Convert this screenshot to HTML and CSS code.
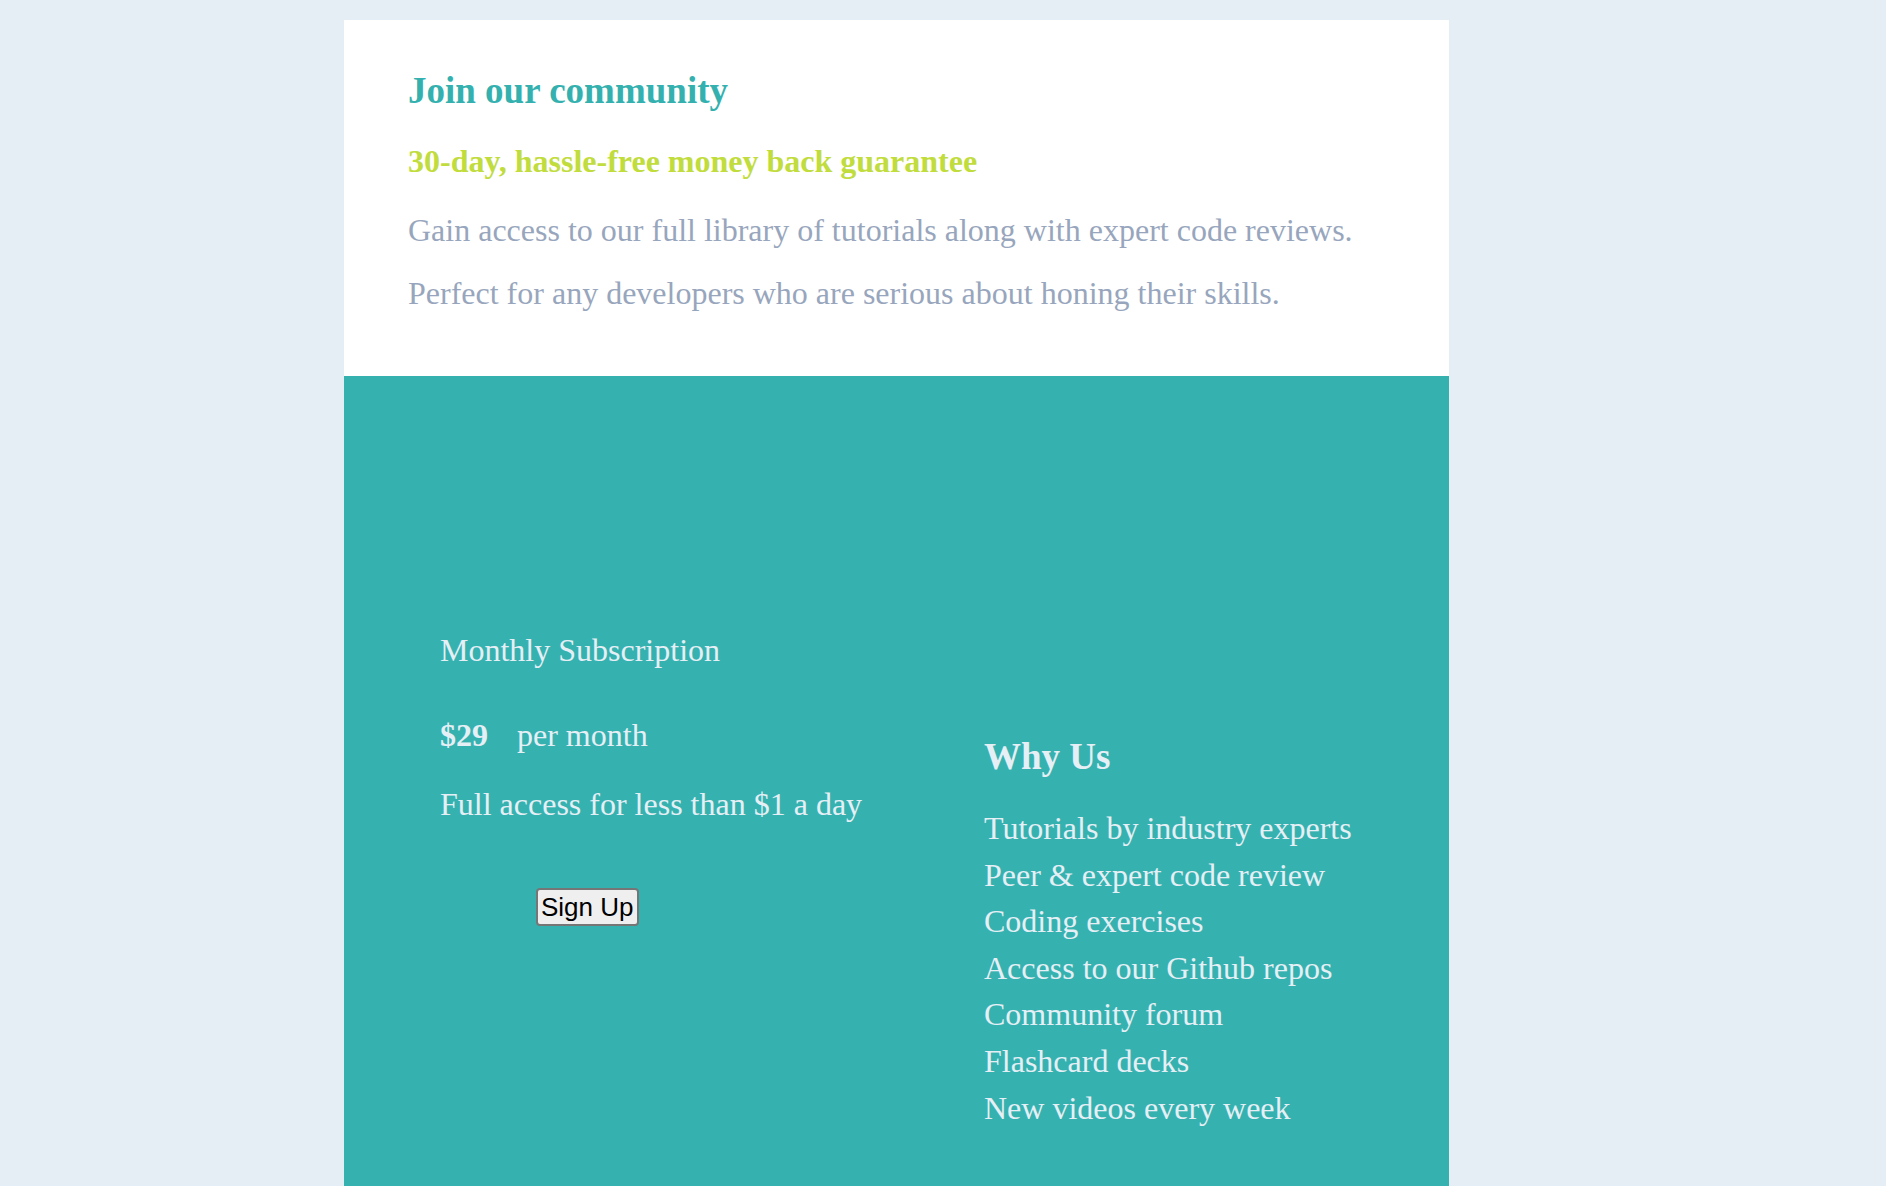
FILE: index.html
```html
<!DOCTYPE html>
<html lang="en">
<head>
<meta charset="utf-8">
<title>Single price grid</title>
<link rel="stylesheet" href="styles.css">
</head>
<body>
<main class="card">
  <section class="intro">
    <h1 class="title">Join our community</h1>
    <h2 class="subtitle">30-day, hassle-free money back guarantee</h2>
    <p class="text text-first">Gain access to our full library of tutorials along with expert code reviews.</p>
    <p class="text text-second">Perfect for any developers who are serious about honing their skills.</p>
  </section>
  <section class="offer">
    <div class="subscription">
      <p class="sub-name">Monthly Subscription</p>
      <div class="price-row">
        <span class="price">$29</span>
        <span class="period">per month</span>
      </div>
      <p class="sub-note">Full access for less than $1 a day</p>
      <button class="signup" type="button">Sign Up</button>
    </div>
    <div class="why">
      <h2 class="why-title">Why Us</h2>
      <ul class="why-list">
        <li>Tutorials by industry experts</li>
        <li>Peer &amp; expert code review</li>
        <li>Coding exercises</li>
        <li>Access to our Github repos</li>
        <li>Community forum</li>
        <li>Flashcard decks</li>
        <li>New videos every week</li>
      </ul>
    </div>
  </section>
</main>
</body>
</html>
```

FILE: styles.css
```css
html, body {
  margin: 0;
  padding: 0;
}

body {
  background: #e6eef5;
  font-family: "Liberation Serif", "Times New Roman", serif;
  padding-top: 20px;
}

.card {
  width: 1105px;
  margin-left: 344px;
}

.intro {
  background: #ffffff;
  padding: 49px 64px 63px;
}

.title {
  margin: 0;
  font-size: 37px;
  line-height: 44px;
  font-weight: bold;
  color: #34b1af;
}

.subtitle {
  margin: 28px 0 0;
  font-size: 32px;
  line-height: 40px;
  font-weight: bold;
  color: #c1dc3d;
}

.text {
  margin: 0;
  font-size: 32px;
  line-height: 40px;
  color: #98a6bd;
}

.text-first {
  margin-top: 29px;
}

.text-second {
  margin-top: 23px;
}

.offer {
  background: #35b2b0;
  color: #e6eff5;
  display: flex;
  align-items: flex-start;
  padding: 254px 0 120px 96px;
}

.subscription {
  width: 544px;
  flex: none;
}

.sub-name {
  margin: 0;
  font-size: 32px;
  line-height: 40px;
}

.price-row {
  margin-top: 45px;
  display: flex;
  align-items: baseline;
  gap: 29px;
  font-size: 32px;
  line-height: 40px;
}

.price {
  font-weight: bold;
}

.sub-note {
  margin: 29px 0 0;
  font-size: 32px;
  line-height: 40px;
}

.signup {
  display: block;
  margin: 64px 0 0 96px;
  padding: 2px 3px;
  font-family: "Liberation Sans", Arial, sans-serif;
  font-size: 26px;
  line-height: 30px;
  color: #000000;
  background: #efefef;
  border: 2px solid #767676;
  border-radius: 4px;
}

.why {
  margin-top: 105px;
}

.why-title {
  margin: 0;
  font-size: 37px;
  line-height: 44px;
  font-weight: bold;
}

.why-list {
  list-style: none;
  margin: 26px 0 0;
  padding: 0;
  font-size: 32px;
  line-height: 46.6px;
}
```
